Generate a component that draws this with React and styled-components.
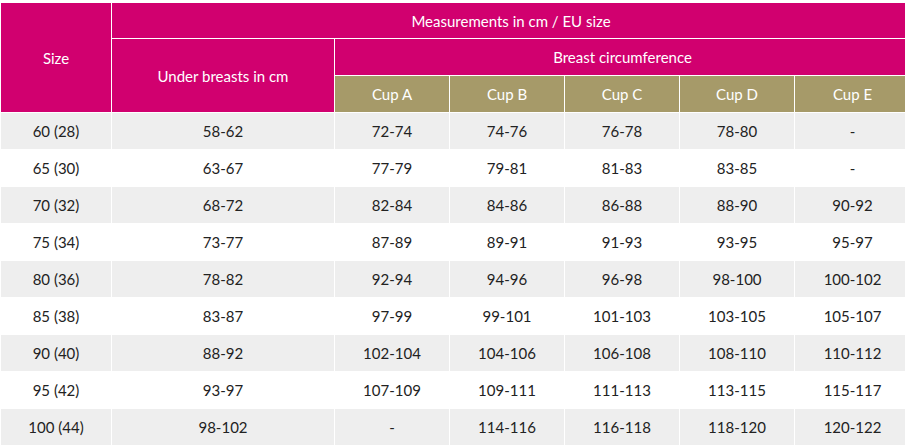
import React from "react";
import styled, { createGlobalStyle } from "styled-components";

const GlobalStyle = createGlobalStyle`
  body {
    margin: 0;
    background: #ffffff;
    overflow: hidden;
    font-family: "Lato", "Open Sans", sans-serif;
  }
`;

const Wrap = styled.div`
  padding-top: 2px;
  width: 910px;
`;

const Table = styled.table`
  width: 910px;
  border-collapse: collapse;
  table-layout: fixed;
  font-size: 15px;
`;

const Col = styled.col`
  width: ${(p) => p.$w}px;
`;

const Cell = styled.td`
  border: 1px solid #ffffff;
  height: 36px;
  padding: 0;
  text-align: center;
  vertical-align: middle;
  color: #222222;
`;

const Head = styled.th`
  border: 1px solid #ffffff;
  height: ${(p) => (p.$top ? 35 : 36)}px;
  padding: 0;
  text-align: center;
  vertical-align: middle;
  font-weight: 400;
  color: #ffffff;
  background: ${(p) => (p.$cup ? "#a69a69" : "#d1006f")};
`;

const Row = styled.tr`
  background: ${(p) => (p.$shaded ? "#eeeeee" : "#ffffff")};
`;

const widths = [111, 223, 115, 115, 115, 115, 116];

const cups = ["Cup A", "Cup B", "Cup C", "Cup D", "Cup E"];

const rows = [
  ["60 (28)", "58-62", "72-74", "74-76", "76-78", "78-80", "-"],
  ["65 (30)", "63-67", "77-79", "79-81", "81-83", "83-85", "-"],
  ["70 (32)", "68-72", "82-84", "84-86", "86-88", "88-90", "90-92"],
  ["75 (34)", "73-77", "87-89", "89-91", "91-93", "93-95", "95-97"],
  ["80 (36)", "78-82", "92-94", "94-96", "96-98", "98-100", "100-102"],
  ["85 (38)", "83-87", "97-99", "99-101", "101-103", "103-105", "105-107"],
  ["90 (40)", "88-92", "102-104", "104-106", "106-108", "108-110", "110-112"],
  ["95 (42)", "93-97", "107-109", "109-111", "111-113", "113-115", "115-117"],
  ["100 (44)", "98-102", "-", "114-116", "116-118", "118-120", "120-122"],
];

function App() {
  return (
    <Wrap>
      <GlobalStyle />
      <Table>
        <colgroup>
          {widths.map((w, i) => (
            <Col key={i} $w={w} />
          ))}
        </colgroup>
        <thead>
          <tr>
            <Head rowSpan={3}>Size</Head>
            <Head colSpan={6} $top>
              Measurements in cm / EU size
            </Head>
          </tr>
          <tr>
            <Head rowSpan={2}>Under breasts in cm</Head>
            <Head colSpan={5}>Breast circumference</Head>
          </tr>
          <tr>
            {cups.map((c) => (
              <Head key={c} $cup>
                {c}
              </Head>
            ))}
          </tr>
        </thead>
        <tbody>
          {rows.map((r, i) => (
            <Row key={r[0]} $shaded={i % 2 === 0}>
              {r.map((v, j) => (
                <Cell key={j}>{v}</Cell>
              ))}
            </Row>
          ))}
        </tbody>
      </Table>
    </Wrap>
  );
}

export default App;
